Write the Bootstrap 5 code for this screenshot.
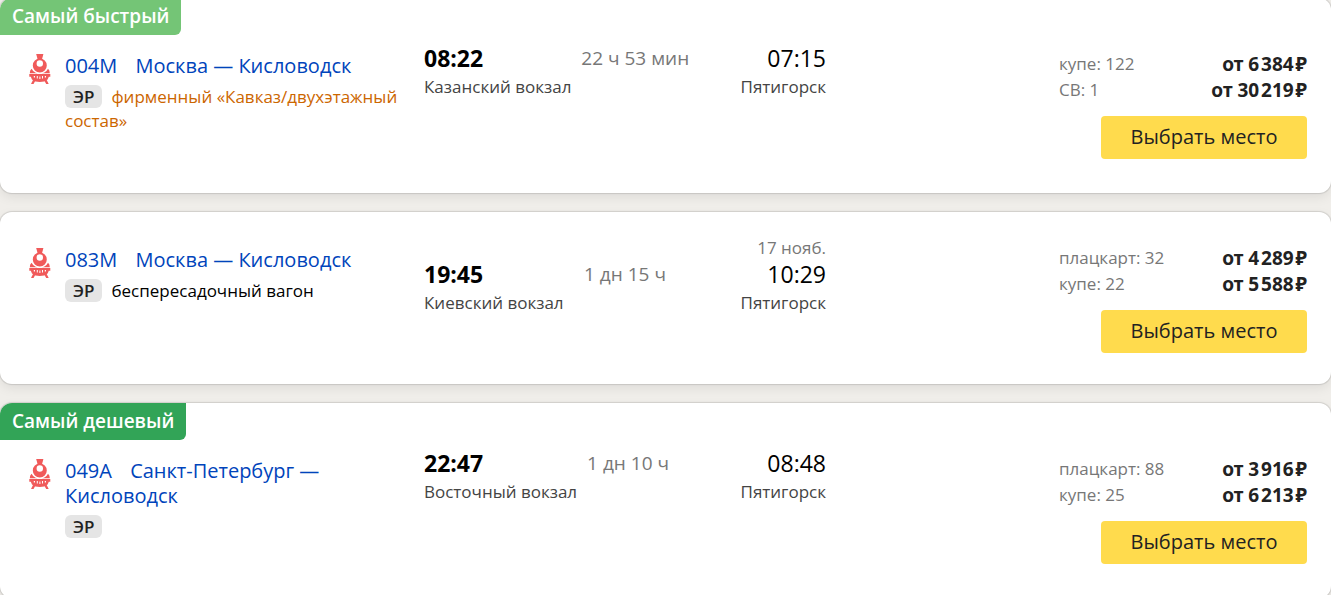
<!DOCTYPE html>
<html lang="ru">
<head>
<meta charset="utf-8">
<meta name="viewport" content="width=device-width, initial-scale=1">
<title>Поезда в Кисловодск</title>
<link href="https://cdn.jsdelivr.net/npm/bootstrap@5.3.0/dist/css/bootstrap.min.css" rel="stylesheet">
<style>
  html { scrollbar-width: none; }
  body { background: #f0eeea; color: #000; font-family: "Open Sans", "Noto Sans", sans-serif; font-size: 17px; line-height: 24px; overflow-x: hidden; }
  .results { gap: 19px; margin-top: -2px; }
  .trip { background: #fff; border-radius: 12px; box-shadow: 0 0 1px 1px rgba(0,0,0,.12), 0 4px 12px rgba(0,0,0,.08); padding: 24px 24px 31px 29px; position: relative; }
  .trip-marked { padding: 44px 24px 34px 29px; }
  .ribbon { position: absolute; top: 0; left: 0; padding: 5px 12px 6px; font-size: 19px; line-height: 26px; font-weight: 600; color: #fff; border-radius: 12px 0 6px 0; }
  .ribbon-fast { background: #74c576; }
  .ribbon-cheap { background: #32a457; }
  .trip-grid { display: grid; grid-template-columns: 395fr 635fr 248fr; }
  .train-line { display: flex; gap: 14px; }
  .train-icon { width: 22px; height: 30px; margin-top: 12px; flex: none; }
  .route { padding-top: 11px; padding-right: 20px; }
  .route-title { font-size: 20px; line-height: 25px; font-weight: 400; margin-bottom: 7px; }
  .route-title a { color: #04b; text-decoration: none; }
  .number { margin-right: 13px; }
  .er { display: inline-block; background: #e5e5e5; color: #222; border-radius: 6px; padding: 0 8px; font-size: 17px; line-height: 23px; font-weight: 600; margin-right: 9px; }
  .brand { color: #c60; }
  .schedule { display: grid; grid-template-columns: 1fr auto 1fr; column-gap: 10px; width: 402px; padding-top: 1px; align-items: end; align-self: start; }
  .clock { font-size: 23px; line-height: 30px; }
  .place { color: #444; line-height: 28px; }
  .length { font-size: 19px; line-height: 30px; margin-bottom: 28px; color: #777; }
  .dim { color: #777; }
  .date { color: #777; line-height: 22px; }
  .fares { padding-top: 9px; }
  .fares td { padding: 0; line-height: 26px; }
  .price { font-family: "Noto Sans", "Open Sans", sans-serif; font-size: 19px; font-weight: 700; color: #222; }
  .choose { width: 206px; padding: 5px 6px 7px; font-size: 20px; line-height: 31px; background: #ffdb4d; color: #222; border: 0; border-radius: 4px; margin-top: 13px; }
  .choose:hover { background: #ffd21f; }
</style>
</head>
<body>
<svg class="d-none" aria-hidden="true">
  <symbol id="train" viewBox="0 0 22 30">
    <g fill="#f05a5a">
      <path d="M7.200 0h7.200l-1.600 6H8.800z"/>
      <path fill-rule="evenodd" d="M10.800 4.500a7 7 0 1 1 0 14 7 7 0 0 1 0-14zm0 1.800a3.200 3.200 0 1 0 0 6.400 3.200 3.200 0 0 0 0-6.400z"/>
      <path d="M2.600 14.800q1.400 3 4 4 2 .5 4.200.5t4.200-.5q2.600-1 4-4 1.800 1.200 1.800 4.500H.8q0-3.300 1.800-4.500z"/>
      <path fill-rule="evenodd" d="M.3 20h21v2.800h-1.500l-1.200 2.700q-3 2.500-7.800 2.500t-7.800-2.500l-1.200-2.700H.3zM4.800 22v1.500h1.200V22zm3 0v2.500h1V22zm2.600.500v2.500h1v-2.500zm2.600-.500v2.500h1V22zm2.800 0v1.500H17V22z"/>
      <path d="M4.500 25l2 1.500L4.500 30H2zM17.200 25l-2 1.500 2 3.500h2.500z"/>
    </g>
  </symbol>
</svg>
<main class="results d-flex flex-column">
  <article class="trip trip-marked">
    <span class="ribbon ribbon-fast">Самый быстрый</span>
    <div class="trip-grid">
      <div class="train-line">
        <svg class="train-icon" aria-hidden="true"><use href="#train"/></svg>
        <div class="route">
          <h2 class="route-title"><a href="#"><span class="number">004М</span> Москва — Кисловодск</a></h2>
          <div><span class="er">ЭР</span><span class="brand">фирменный «Кавказ/двухэтажный состав»</span></div>
        </div>
      </div>
      <div class="schedule">
        <div><div class="clock fw-bold">08:22</div><div class="place text-nowrap">Казанский вокзал</div></div>
        <div class="length text-nowrap">22 ч 53 мин</div>
        <div class="text-end"><div class="clock">07:15</div><div class="place">Пятигорск</div></div>
      </div>
      <div class="fares text-end">
        <table class="w-100">
          <tr><td class="dim text-start">купе: 122</td><td class="price">от 6&#8202;384&#8202;₽</td></tr>
          <tr><td class="dim text-start">СВ: 1</td><td class="price">от 30&#8202;219&#8202;₽</td></tr>
        </table>
        <button type="button" class="btn choose">Выбрать место</button>
      </div>
    </div>
  </article>
  <article class="trip">
    <div class="trip-grid">
      <div class="train-line">
        <svg class="train-icon" aria-hidden="true"><use href="#train"/></svg>
        <div class="route">
          <h2 class="route-title"><a href="#"><span class="number">083М</span> Москва — Кисловодск</a></h2>
          <div><span class="er">ЭР</span>беспересадочный вагон</div>
        </div>
      </div>
      <div class="schedule">
        <div><div class="clock fw-bold">19:45</div><div class="place text-nowrap">Киевский вокзал</div></div>
        <div class="length text-nowrap">1 дн 15 ч</div>
        <div class="text-end"><div class="date">17 нояб.</div><div class="clock">10:29</div><div class="place">Пятигорск</div></div>
      </div>
      <div class="fares text-end">
        <table class="w-100">
          <tr><td class="dim text-start">плацкарт: 32</td><td class="price">от 4&#8202;289&#8202;₽</td></tr>
          <tr><td class="dim text-start">купе: 22</td><td class="price">от 5&#8202;588&#8202;₽</td></tr>
        </table>
        <button type="button" class="btn choose">Выбрать место</button>
      </div>
    </div>
  </article>
  <article class="trip trip-marked">
    <span class="ribbon ribbon-cheap">Самый дешевый</span>
    <div class="trip-grid">
      <div class="train-line">
        <svg class="train-icon" aria-hidden="true"><use href="#train"/></svg>
        <div class="route">
          <h2 class="route-title"><a href="#"><span class="number">049А</span> Санкт-Петербург — Кисловодск</a></h2>
          <div><span class="er">ЭР</span></div>
        </div>
      </div>
      <div class="schedule">
        <div><div class="clock fw-bold">22:47</div><div class="place text-nowrap">Восточный вокзал</div></div>
        <div class="length text-nowrap">1 дн 10 ч</div>
        <div class="text-end"><div class="clock">08:48</div><div class="place">Пятигорск</div></div>
      </div>
      <div class="fares text-end">
        <table class="w-100">
          <tr><td class="dim text-start">плацкарт: 88</td><td class="price">от 3&#8202;916&#8202;₽</td></tr>
          <tr><td class="dim text-start">купе: 25</td><td class="price">от 6&#8202;213&#8202;₽</td></tr>
        </table>
        <button type="button" class="btn choose">Выбрать место</button>
      </div>
    </div>
  </article>
</main>
<script src="https://cdn.jsdelivr.net/npm/bootstrap@5.3.0/dist/js/bootstrap.bundle.min.js"></script>
</body>
</html>
